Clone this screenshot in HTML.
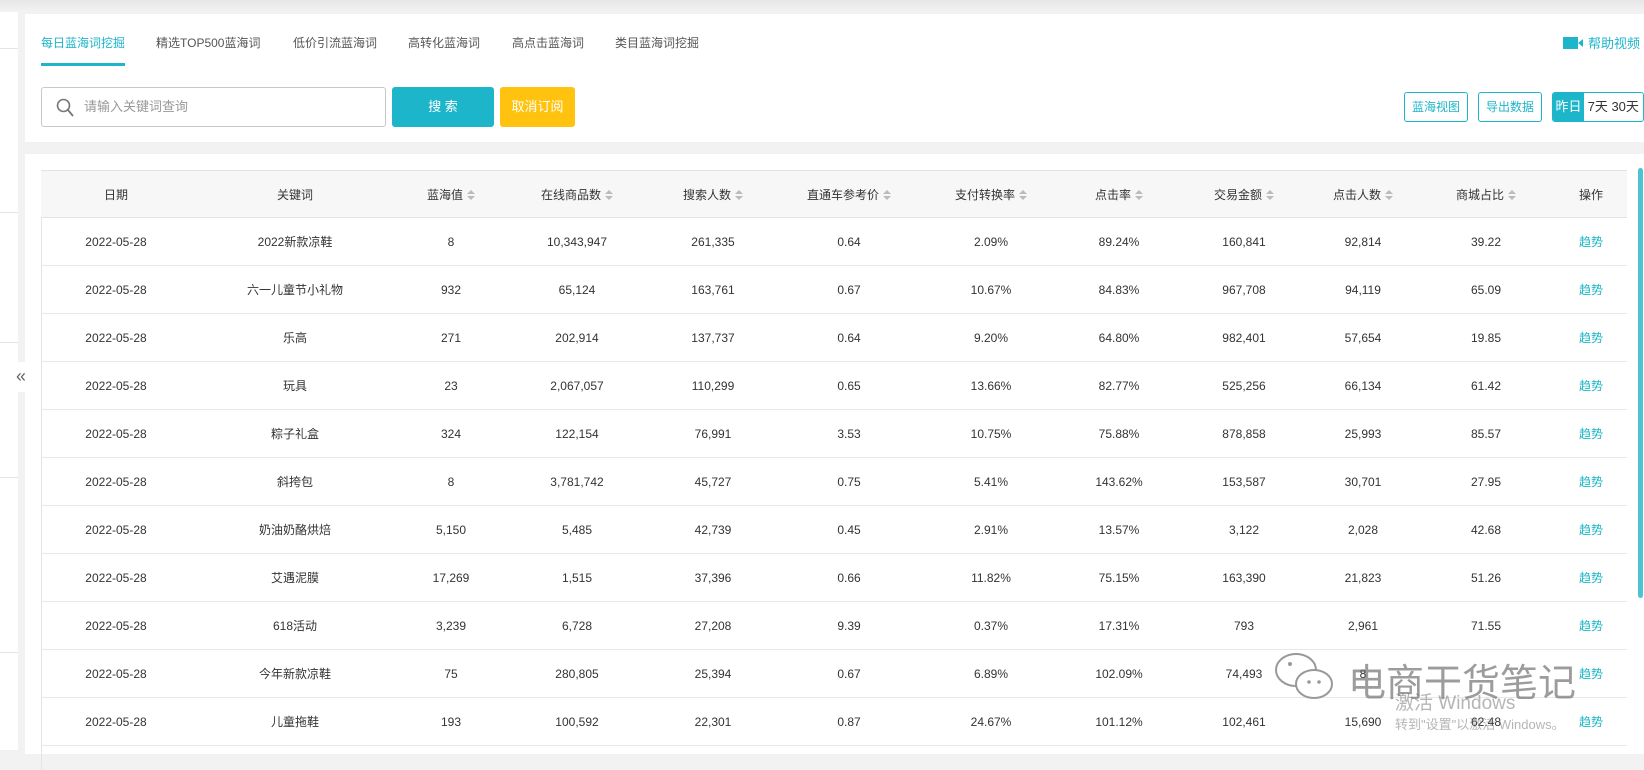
<!DOCTYPE html>
<html><head><meta charset="utf-8">
<style>
*{margin:0;padding:0;box-sizing:border-box}
body{width:1644px;height:750px;overflow:hidden;background:#f2f2f2;font-family:"Liberation Sans","Noto Sans CJK SC",sans-serif;color:#333;position:relative}
.topbar{position:absolute;left:0;top:0;width:1644px;height:12px;background:linear-gradient(#e6e6e6,#f2f2f2)}
.side{position:absolute;left:0;top:12px;width:18px;height:738px;background:#fff}
.side i{position:absolute;left:0;width:18px;height:1px;background:#e4e4e4}
.arrow{position:absolute;left:10px;top:362px;font-size:18px;color:#666;background:#fff;width:22px;height:30px;line-height:28px;text-align:center}
.card1{position:absolute;left:25px;top:14px;width:1619px;height:128px;background:#fff}
.tab{position:absolute;top:20px;font-size:12px;color:#555;white-space:nowrap}
.tab.on{color:#1cb5c9}
.ul{position:absolute;left:16px;top:49px;width:84px;height:3px;background:#1cb5c9}
.help{position:absolute;left:1538px;top:19px;font-size:13px;color:#1cb5c9;white-space:nowrap}
.help b{display:inline-block;width:15px;height:12px;background:#1cb5c9;vertical-align:-1px;margin-right:10px;position:relative}
.help b:after{content:"";position:absolute;right:-5px;top:2px;border-right:5px solid #1cb5c9;border-top:4px solid transparent;border-bottom:4px solid transparent}
.inp{position:absolute;left:16px;top:73px;width:345px;height:40px;border:1px solid #c8c8c8;border-radius:3px;font-size:13px;color:#999;line-height:38px;padding-left:42px}
.inp svg{position:absolute;left:14px;top:10px}
.btn{position:absolute;top:73px;height:40px;border-radius:3px;color:#fff;font-size:13px;text-align:center;line-height:40px}
.obtn{position:absolute;top:78px;height:30px;border:1px solid #1cb5c9;border-radius:3px;color:#1cb5c9;font-size:12px;text-align:center;line-height:28px}
.card2{position:absolute;left:25px;top:154px;width:1619px;height:600px;background:#fff}
table{position:absolute;left:16px;top:16px;border-collapse:collapse;table-layout:fixed;width:1586px;font-size:12px}
th{background:#f7f7f7;height:47px;font-weight:normal;color:#333;border-bottom:1px solid #e4e4e4;border-top:1px solid #e4e4e4}
td{height:48px;text-align:center;border-bottom:1px solid #e8e8e8}
td:last-child{color:#1cb5c9}
.tbl{position:absolute;left:16px;top:16px;width:1595px;height:600px;border-left:1px solid #e4e4e4}
.s{display:inline-block;width:8px;height:10px;vertical-align:-1px;margin-left:4px;position:relative}
.s:before{content:"";position:absolute;left:0;top:0;border-left:4px solid transparent;border-right:4px solid transparent;border-bottom:4px solid #bbb}
.s:after{content:"";position:absolute;left:0;top:6px;border-left:4px solid transparent;border-right:4px solid transparent;border-top:4px solid #bbb}
.scroll{position:absolute;left:1638px;top:168px;width:5px;height:430px;background:#4cc3d2;border-radius:3px}
.wm{position:absolute;color:rgba(120,120,120,.55);white-space:nowrap}
</style></head><body>
<div class="topbar"></div>
<div class="side"><i style="top:36px"></i><i style="top:200px"></i><i style="top:330px"></i><i style="top:465px"></i><i style="top:640px"></i></div>
<div class="card1">
<div class="tab on" style="left:16px">每日蓝海词挖掘</div>
<div class="tab" style="left:131px">精选TOP500蓝海词</div>
<div class="tab" style="left:268px">低价引流蓝海词</div>
<div class="tab" style="left:383px">高转化蓝海词</div>
<div class="tab" style="left:487px">高点击蓝海词</div>
<div class="tab" style="left:590px">类目蓝海词挖掘</div>
<div class="ul"></div>
<div class="help"><b></b>帮助视频</div>
<div class="inp"><svg width="18" height="20" viewBox="0 0 18 20"><circle cx="7.5" cy="7.5" r="6" fill="none" stroke="#777" stroke-width="1.6"/><path d="M12 12l5 6" stroke="#777" stroke-width="1.8"/></svg>请输入关键词查询</div>
<div class="btn" style="left:367px;width:102px;background:#1cb5c9">搜 索</div>
<div class="btn" style="left:475px;width:75px;background:#ffc20e">取消订阅</div>
<div class="obtn" style="left:1379px;width:64px">蓝海视图</div>
<div class="obtn" style="left:1453px;width:64px">导出数据</div>
<div class="obtn" style="left:1527px;width:92px;color:#333;font-size:13px;text-align:left;overflow:hidden"><span style="display:inline-block;width:31px;background:#1cb5c9;color:#fff;text-align:center">昨日</span> 7天 30天</div>
</div>
<div class="arrow">«</div>
<div class="card2">
<div class="tbl"></div>
<table>
<colgroup><col style="width:150px"><col style="width:208px"><col style="width:104px"><col style="width:148px"><col style="width:124px"><col style="width:148px"><col style="width:136px"><col style="width:120px"><col style="width:130px"><col style="width:108px"><col style="width:138px"><col style="width:72px"></colgroup>
<tr><th>日期</th><th>关键词</th><th>蓝海值<span class="s"></span></th><th>在线商品数<span class="s"></span></th><th>搜索人数<span class="s"></span></th><th>直通车参考价<span class="s"></span></th><th>支付转换率<span class="s"></span></th><th>点击率<span class="s"></span></th><th>交易金额<span class="s"></span></th><th>点击人数<span class="s"></span></th><th>商城占比<span class="s"></span></th><th>操作</th></tr>
<tr><td>2022-05-28</td><td>2022新款凉鞋</td><td>8</td><td>10,343,947</td><td>261,335</td><td>0.64</td><td>2.09%</td><td>89.24%</td><td>160,841</td><td>92,814</td><td>39.22</td><td>趋势</td></tr>
<tr><td>2022-05-28</td><td>六一儿童节小礼物</td><td>932</td><td>65,124</td><td>163,761</td><td>0.67</td><td>10.67%</td><td>84.83%</td><td>967,708</td><td>94,119</td><td>65.09</td><td>趋势</td></tr>
<tr><td>2022-05-28</td><td>乐高</td><td>271</td><td>202,914</td><td>137,737</td><td>0.64</td><td>9.20%</td><td>64.80%</td><td>982,401</td><td>57,654</td><td>19.85</td><td>趋势</td></tr>
<tr><td>2022-05-28</td><td>玩具</td><td>23</td><td>2,067,057</td><td>110,299</td><td>0.65</td><td>13.66%</td><td>82.77%</td><td>525,256</td><td>66,134</td><td>61.42</td><td>趋势</td></tr>
<tr><td>2022-05-28</td><td>粽子礼盒</td><td>324</td><td>122,154</td><td>76,991</td><td>3.53</td><td>10.75%</td><td>75.88%</td><td>878,858</td><td>25,993</td><td>85.57</td><td>趋势</td></tr>
<tr><td>2022-05-28</td><td>斜挎包</td><td>8</td><td>3,781,742</td><td>45,727</td><td>0.75</td><td>5.41%</td><td>143.62%</td><td>153,587</td><td>30,701</td><td>27.95</td><td>趋势</td></tr>
<tr><td>2022-05-28</td><td>奶油奶酪烘焙</td><td>5,150</td><td>5,485</td><td>42,739</td><td>0.45</td><td>2.91%</td><td>13.57%</td><td>3,122</td><td>2,028</td><td>42.68</td><td>趋势</td></tr>
<tr><td>2022-05-28</td><td>艾遇泥膜</td><td>17,269</td><td>1,515</td><td>37,396</td><td>0.66</td><td>11.82%</td><td>75.15%</td><td>163,390</td><td>21,823</td><td>51.26</td><td>趋势</td></tr>
<tr><td>2022-05-28</td><td>618活动</td><td>3,239</td><td>6,728</td><td>27,208</td><td>9.39</td><td>0.37%</td><td>17.31%</td><td>793</td><td>2,961</td><td>71.55</td><td>趋势</td></tr>
<tr><td>2022-05-28</td><td>今年新款凉鞋</td><td>75</td><td>280,805</td><td>25,394</td><td>0.67</td><td>6.89%</td><td>102.09%</td><td>74,493</td><td>8</td><td></td><td>趋势</td></tr>
<tr><td>2022-05-28</td><td>儿童拖鞋</td><td>193</td><td>100,592</td><td>22,301</td><td>0.87</td><td>24.67%</td><td>101.12%</td><td>102,461</td><td>15,690</td><td>62.48</td><td>趋势</td></tr>
</table>
</div>
<div class="scroll"></div>
<svg style="position:absolute;left:1272px;top:650px" width="66" height="56" viewBox="0 0 66 56"><ellipse cx="24" cy="20" rx="20" ry="16" fill="#fff" stroke="#999" stroke-width="2"/><ellipse cx="42" cy="34" rx="18" ry="14" fill="#fff" stroke="#999" stroke-width="2"/><circle cx="18" cy="14" r="2" fill="#999"/><circle cx="37" cy="32" r="1.8" fill="#999"/><circle cx="47" cy="32" r="1.8" fill="#999"/></svg>
<div class="wm" style="left:1348px;top:652px;font-size:38px;color:rgba(90,90,90,.6)">电商干货笔记</div>
<div class="wm" style="left:1395px;top:688px;font-size:19px">激活 Windows</div>
<div class="wm" style="left:1395px;top:714px;font-size:13px">转到"设置"以激活 Windows。</div>
</body></html>
